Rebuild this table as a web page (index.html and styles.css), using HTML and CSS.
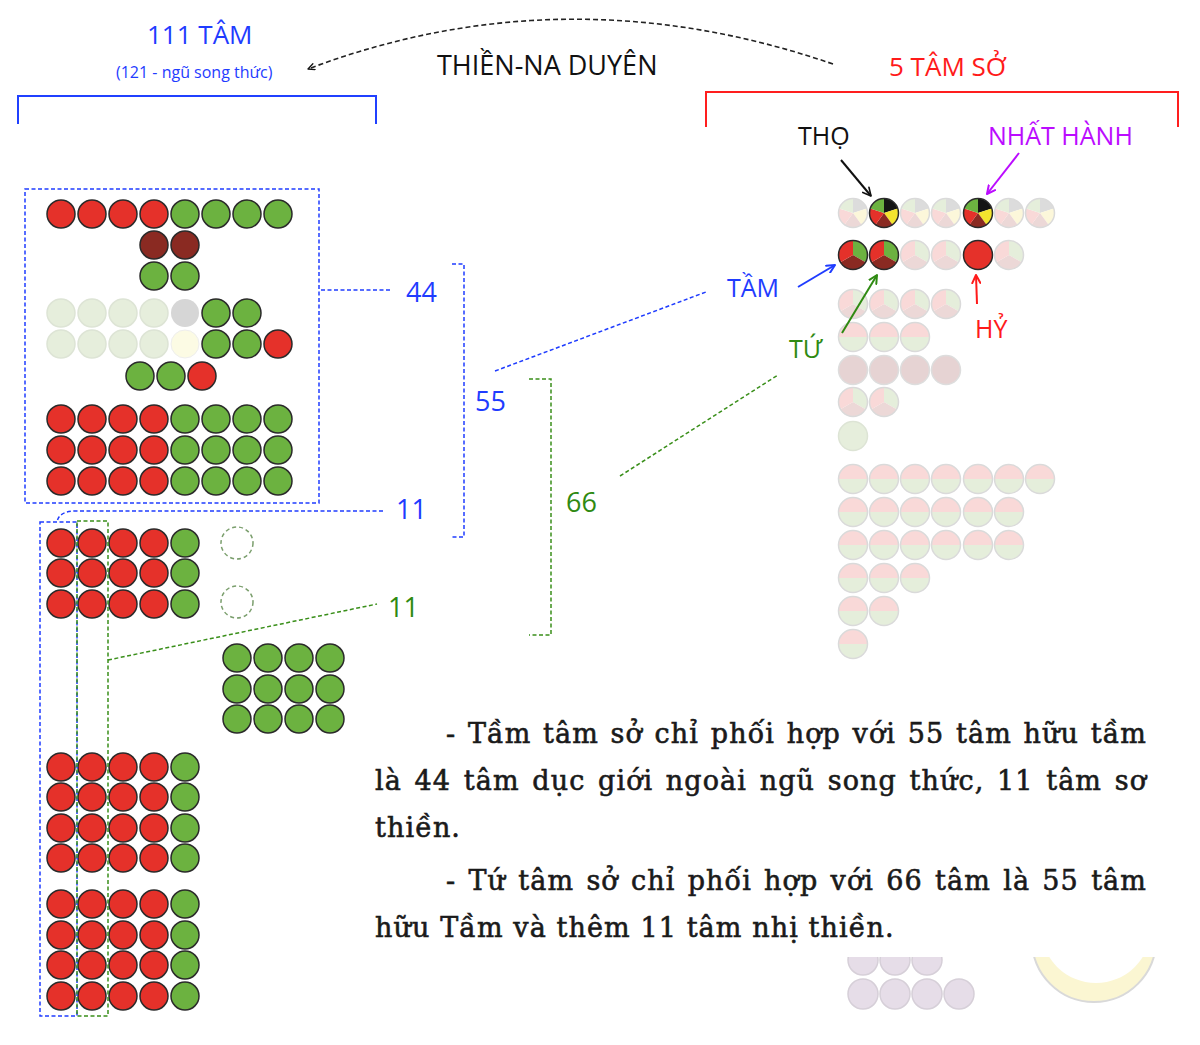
FILE: index.html
```html
<!DOCTYPE html>
<html lang="vi">
<head>
<meta charset="utf-8">
<title>Tâm sở – Thiền-na duyên</title>
<link rel="stylesheet" href="styles.css">
</head>
<body>
<div class="page">
<svg class="diagram" width="1200" height="1045" viewBox="0 0 1200 1045" xmlns="http://www.w3.org/2000/svg">
  <defs>
    <marker id="ak" viewBox="0 0 10 10" refX="9" refY="5" markerWidth="10" markerHeight="10" markerUnits="userSpaceOnUse" orient="auto"><path class="mk mk-k" d="M1 1 L9 5 L1 9"/></marker>
    <marker id="ak2" viewBox="0 0 10 10" refX="9" refY="5" markerWidth="8" markerHeight="8" markerUnits="userSpaceOnUse" orient="auto"><path class="mk mk-k" d="M1 1 L9 5 L1 9"/></marker>
    <marker id="am" viewBox="0 0 10 10" refX="9" refY="5" markerWidth="10" markerHeight="10" markerUnits="userSpaceOnUse" orient="auto"><path class="mk mk-m" d="M1 1 L9 5 L1 9"/></marker>
    <marker id="ab" viewBox="0 0 10 10" refX="9" refY="5" markerWidth="10" markerHeight="10" markerUnits="userSpaceOnUse" orient="auto"><path class="mk mk-b" d="M1 1 L9 5 L1 9"/></marker>
    <marker id="ag" viewBox="0 0 10 10" refX="9" refY="5" markerWidth="10" markerHeight="10" markerUnits="userSpaceOnUse" orient="auto"><path class="mk mk-g" d="M1 1 L9 5 L1 9"/></marker>
    <marker id="ar" viewBox="0 0 10 10" refX="9" refY="5" markerWidth="10" markerHeight="10" markerUnits="userSpaceOnUse" orient="auto"><path class="mk mk-r" d="M1 1 L9 5 L1 9"/></marker>

    <g id="p5">
      <path class="k" d="M0 0 L0 -14.5 A14.5 14.5 0 0 1 13.79 -4.48 Z"/>
      <path class="y" d="M0 0 L13.79 -4.48 A14.5 14.5 0 0 1 8.52 11.73 Z"/>
      <path class="dr" d="M0 0 L8.52 11.73 A14.5 14.5 0 0 1 -8.52 11.73 Z"/>
      <path class="r" d="M0 0 L-8.52 11.73 A14.5 14.5 0 0 1 -13.79 -4.48 Z"/>
      <path class="g" d="M0 0 L-13.79 -4.48 A14.5 14.5 0 0 1 0 -14.5 Z"/>
      <circle class="ol" r="14.5"/>
    </g>
    <g id="p5f">
      <path class="fk" d="M0 0 L0 -14.5 A14.5 14.5 0 0 1 13.79 -4.48 Z"/>
      <path class="fy" d="M0 0 L13.79 -4.48 A14.5 14.5 0 0 1 8.52 11.73 Z"/>
      <path class="fdr" d="M0 0 L8.52 11.73 A14.5 14.5 0 0 1 -8.52 11.73 Z"/>
      <path class="fr" d="M0 0 L-8.52 11.73 A14.5 14.5 0 0 1 -13.79 -4.48 Z"/>
      <path class="fg" d="M0 0 L-13.79 -4.48 A14.5 14.5 0 0 1 0 -14.5 Z"/>
      <circle class="fol" r="14.5"/>
    </g>
    <g id="p3">
      <path class="g" d="M0 0 L0 -14.5 A14.5 14.5 0 0 1 12.56 7.25 Z"/>
      <path class="dr" d="M0 0 L12.56 7.25 A14.5 14.5 0 0 1 -12.56 7.25 Z"/>
      <path class="r" d="M0 0 L-12.56 7.25 A14.5 14.5 0 0 1 0 -14.5 Z"/>
      <circle class="ol" r="14.5"/>
    </g>
    <g id="p3f">
      <path class="fg" d="M0 0 L0 -14.5 A14.5 14.5 0 0 1 12.56 7.25 Z"/>
      <path class="fdr" d="M0 0 L12.56 7.25 A14.5 14.5 0 0 1 -12.56 7.25 Z"/>
      <path class="fr" d="M0 0 L-12.56 7.25 A14.5 14.5 0 0 1 0 -14.5 Z"/>
      <circle class="fol" r="14.5"/>
    </g>
    <g id="hf">
      <path class="fr" d="M-14.5 0 A14.5 14.5 0 0 1 14.5 0 Z"/>
      <path class="fg" d="M-14.5 0 A14.5 14.5 0 0 0 14.5 0 Z"/>
      <circle class="fol" r="14.5"/>
    </g>
  </defs>

  <!-- header -->
  <text class="lbl blue t26" x="147" y="44">111 TÂM</text>
  <text class="lbl blue t16" x="116" y="78">(121 - ngũ song thức)</text>
  <path class="brk-b" d="M18 124 V96 H376 V124"/>

  <path class="arc" d="M833 64 Q565 -28 308 69" marker-end="url(#ak2)"/>
  <text class="lbl black t27" x="437" y="75">THIỀN-NA DUYÊN</text>

  <text class="lbl red t26" x="889" y="76">5 TÂM SỞ</text>
  <path class="brk-r" d="M706 127 V92 H1178 V127"/>

  <!-- left upper group -->
  <g class="c">
    <circle class="r" cx="61" cy="214" r="14"/><circle class="r" cx="92" cy="214" r="14"/><circle class="r" cx="123" cy="214" r="14"/><circle class="r" cx="154" cy="214" r="14"/>
    <circle class="g" cx="185" cy="214" r="14"/><circle class="g" cx="216" cy="214" r="14"/><circle class="g" cx="247" cy="214" r="14"/><circle class="g" cx="278" cy="214" r="14"/>
    <circle class="dr" cx="154" cy="245" r="14"/><circle class="dr" cx="185" cy="245" r="14"/>
    <circle class="g" cx="154" cy="276" r="14"/><circle class="g" cx="185" cy="276" r="14"/>
    <circle class="g" cx="216" cy="313" r="14"/><circle class="g" cx="247" cy="313" r="14"/>
    <circle class="g" cx="216" cy="344" r="14"/><circle class="g" cx="247" cy="344" r="14"/><circle class="r" cx="278" cy="344" r="14"/>
    <circle class="g" cx="140" cy="376" r="14"/><circle class="g" cx="171" cy="376" r="14"/><circle class="r" cx="202" cy="376" r="14"/>

    <circle class="r" cx="61" cy="419" r="14"/><circle class="r" cx="92" cy="419" r="14"/><circle class="r" cx="123" cy="419" r="14"/><circle class="r" cx="154" cy="419" r="14"/>
    <circle class="g" cx="185" cy="419" r="14"/><circle class="g" cx="216" cy="419" r="14"/><circle class="g" cx="247" cy="419" r="14"/><circle class="g" cx="278" cy="419" r="14"/>
    <circle class="r" cx="61" cy="450" r="14"/><circle class="r" cx="92" cy="450" r="14"/><circle class="r" cx="123" cy="450" r="14"/><circle class="r" cx="154" cy="450" r="14"/>
    <circle class="g" cx="185" cy="450" r="14"/><circle class="g" cx="216" cy="450" r="14"/><circle class="g" cx="247" cy="450" r="14"/><circle class="g" cx="278" cy="450" r="14"/>
    <circle class="r" cx="61" cy="481" r="14"/><circle class="r" cx="92" cy="481" r="14"/><circle class="r" cx="123" cy="481" r="14"/><circle class="r" cx="154" cy="481" r="14"/>
    <circle class="g" cx="185" cy="481" r="14"/><circle class="g" cx="216" cy="481" r="14"/><circle class="g" cx="247" cy="481" r="14"/><circle class="g" cx="278" cy="481" r="14"/>
  </g>
  <g class="pale">
    <circle cx="61" cy="313" r="14"/><circle cx="92" cy="313" r="14"/><circle cx="123" cy="313" r="14"/><circle cx="154" cy="313" r="14"/>
    <circle cx="61" cy="344" r="14"/><circle cx="92" cy="344" r="14"/><circle cx="123" cy="344" r="14"/><circle cx="154" cy="344" r="14"/>
  </g>
  <circle class="grey" cx="185" cy="313" r="14"/>
  <circle class="cream" cx="185" cy="344" r="14"/>

  <rect class="box-b" x="25" y="189" width="294" height="314"/>
  <line class="dash-b" x1="321" y1="290" x2="392" y2="290"/>
  <text class="lbl blue t27" x="406" y="302">44</text>

  <!-- left lower group -->
  <g class="c">
    <circle class="r" cx="61" cy="543" r="14"/><circle class="r" cx="92" cy="543" r="14"/><circle class="r" cx="123" cy="543" r="14"/><circle class="r" cx="154" cy="543" r="14"/><circle class="g" cx="185" cy="543" r="14"/>
    <circle class="r" cx="61" cy="573" r="14"/><circle class="r" cx="92" cy="573" r="14"/><circle class="r" cx="123" cy="573" r="14"/><circle class="r" cx="154" cy="573" r="14"/><circle class="g" cx="185" cy="573" r="14"/>
    <circle class="r" cx="61" cy="604" r="14"/><circle class="r" cx="92" cy="604" r="14"/><circle class="r" cx="123" cy="604" r="14"/><circle class="r" cx="154" cy="604" r="14"/><circle class="g" cx="185" cy="604" r="14"/>

    <circle class="g" cx="237" cy="658" r="14"/><circle class="g" cx="268" cy="658" r="14"/><circle class="g" cx="299" cy="658" r="14"/><circle class="g" cx="330" cy="658" r="14"/>
    <circle class="g" cx="237" cy="689" r="14"/><circle class="g" cx="268" cy="689" r="14"/><circle class="g" cx="299" cy="689" r="14"/><circle class="g" cx="330" cy="689" r="14"/>
    <circle class="g" cx="237" cy="719" r="14"/><circle class="g" cx="268" cy="719" r="14"/><circle class="g" cx="299" cy="719" r="14"/><circle class="g" cx="330" cy="719" r="14"/>

    <circle class="r" cx="61" cy="767" r="14"/><circle class="r" cx="92" cy="767" r="14"/><circle class="r" cx="123" cy="767" r="14"/><circle class="r" cx="154" cy="767" r="14"/><circle class="g" cx="185" cy="767" r="14"/>
    <circle class="r" cx="61" cy="797" r="14"/><circle class="r" cx="92" cy="797" r="14"/><circle class="r" cx="123" cy="797" r="14"/><circle class="r" cx="154" cy="797" r="14"/><circle class="g" cx="185" cy="797" r="14"/>
    <circle class="r" cx="61" cy="828" r="14"/><circle class="r" cx="92" cy="828" r="14"/><circle class="r" cx="123" cy="828" r="14"/><circle class="r" cx="154" cy="828" r="14"/><circle class="g" cx="185" cy="828" r="14"/>
    <circle class="r" cx="61" cy="858" r="14"/><circle class="r" cx="92" cy="858" r="14"/><circle class="r" cx="123" cy="858" r="14"/><circle class="r" cx="154" cy="858" r="14"/><circle class="g" cx="185" cy="858" r="14"/>
    <circle class="r" cx="61" cy="904" r="14"/><circle class="r" cx="92" cy="904" r="14"/><circle class="r" cx="123" cy="904" r="14"/><circle class="r" cx="154" cy="904" r="14"/><circle class="g" cx="185" cy="904" r="14"/>
    <circle class="r" cx="61" cy="935" r="14"/><circle class="r" cx="92" cy="935" r="14"/><circle class="r" cx="123" cy="935" r="14"/><circle class="r" cx="154" cy="935" r="14"/><circle class="g" cx="185" cy="935" r="14"/>
    <circle class="r" cx="61" cy="965" r="14"/><circle class="r" cx="92" cy="965" r="14"/><circle class="r" cx="123" cy="965" r="14"/><circle class="r" cx="154" cy="965" r="14"/><circle class="g" cx="185" cy="965" r="14"/>
    <circle class="r" cx="61" cy="996" r="14"/><circle class="r" cx="92" cy="996" r="14"/><circle class="r" cx="123" cy="996" r="14"/><circle class="r" cx="154" cy="996" r="14"/><circle class="g" cx="185" cy="996" r="14"/>
  </g>
  <circle class="ghost" cx="237" cy="543" r="16"/>
  <circle class="ghost" cx="237" cy="602" r="16"/>

  <rect class="box-b" x="40" y="522" width="37" height="494"/>
  <rect class="box-g" x="77" y="521" width="31" height="495"/>
  <path class="dash-b" d="M383 511 H76 Q59 511 57 522"/>
  <line class="dash-g" x1="108" y1="660" x2="377" y2="604"/>

  <text class="lbl blue t27" x="396" y="519">11</text>
  <text class="lbl green t27" x="388" y="617">11</text>

  <!-- brackets -->
  <path class="dash-b" d="M452 264 H464 V537 H452"/>
  <text class="lbl blue t27" x="475" y="411">55</text>
  <line class="dash-b" x1="495" y1="371" x2="706" y2="292"/>
  <path class="dash-g" d="M529 379 H551 V635 H529"/>
  <text class="lbl green t27" x="566" y="512">66</text>
  <line class="dash-g" x1="620" y1="476" x2="778" y2="375"/>

  <!-- right group -->
  <use href="#p5f" x="853" y="213"/><use href="#p5" x="884" y="213"/><use href="#p5f" x="915" y="213"/><use href="#p5f" x="946" y="213"/>
  <use href="#p5" x="978" y="213"/><use href="#p5f" x="1009" y="213"/><use href="#p5f" x="1040" y="213"/>

  <use href="#p3" x="853" y="255"/><use href="#p3" x="884" y="255"/><use href="#p3f" x="915" y="255"/><use href="#p3f" x="946" y="255"/>
  <circle class="c r" cx="978" cy="255" r="14.5"/>
  <use href="#p3f" x="1009" y="255"/>

  <use href="#p3f" x="853" y="304"/><use href="#p3f" x="884" y="304"/><use href="#p3f" x="915" y="304"/><use href="#p3f" x="946" y="304"/>
  <use href="#hf" x="853" y="337"/><use href="#hf" x="884" y="337"/><use href="#hf" x="915" y="337"/>
  <g class="mauve">
    <circle cx="853" cy="370" r="14.5"/><circle cx="884" cy="370" r="14.5"/><circle cx="915" cy="370" r="14.5"/><circle cx="946" cy="370" r="14.5"/>
  </g>
  <use href="#p3f" x="853" y="402"/><use href="#p3f" x="884" y="402"/>
  <circle class="pale" cx="853" cy="436" r="14.5"/>

  <use href="#hf" x="853" y="479"/><use href="#hf" x="884" y="479"/><use href="#hf" x="915" y="479"/><use href="#hf" x="946" y="479"/><use href="#hf" x="978" y="479"/><use href="#hf" x="1009" y="479"/><use href="#hf" x="1040" y="479"/>
  <use href="#hf" x="853" y="512"/><use href="#hf" x="884" y="512"/><use href="#hf" x="915" y="512"/><use href="#hf" x="946" y="512"/><use href="#hf" x="978" y="512"/><use href="#hf" x="1009" y="512"/>
  <use href="#hf" x="853" y="545"/><use href="#hf" x="884" y="545"/><use href="#hf" x="915" y="545"/><use href="#hf" x="946" y="545"/><use href="#hf" x="978" y="545"/><use href="#hf" x="1009" y="545"/>
  <use href="#hf" x="853" y="578"/><use href="#hf" x="884" y="578"/><use href="#hf" x="915" y="578"/>
  <use href="#hf" x="853" y="611"/><use href="#hf" x="884" y="611"/>
  <use href="#hf" x="853" y="644"/>

  <!-- right labels & arrows -->
  <text class="lbl black t25" x="798" y="145">THỌ</text>
  <text class="lbl magenta t25" x="988" y="145">NHẤT HÀNH</text>
  <line class="ar-k" x1="841" y1="160" x2="871" y2="196" marker-end="url(#ak)"/>
  <line class="ar-m" x1="1019" y1="153" x2="987" y2="194" marker-end="url(#am)"/>

  <text class="lbl blue t25" x="727" y="297">TẦM</text>
  <line class="ar-b" x1="798" y1="287" x2="835" y2="265" marker-end="url(#ab)"/>
  <text class="lbl green t25" x="789" y="358">TỨ</text>
  <line class="ar-g" x1="842" y1="333" x2="877" y2="275" marker-end="url(#ag)"/>
  <text class="lbl red t25" x="975" y="338">HỶ</text>
  <line class="ar-r" x1="977" y1="304" x2="976" y2="275" marker-end="url(#ar)"/>

  <!-- bottom right, partly covered -->
  <g class="lilac">
    <circle cx="863" cy="960" r="15"/><circle cx="895" cy="960" r="15"/><circle cx="927" cy="960" r="15"/>
    <circle cx="863" cy="994" r="15"/><circle cx="895" cy="994" r="15"/><circle cx="927" cy="994" r="15"/><circle cx="959" cy="994" r="15"/>
  </g>
  <circle class="moon" cx="1094" cy="940" r="62"/>
  <circle class="moon-in" cx="1096" cy="928" r="55"/>
</svg>

<div class="note">
  <p class="para">
    <span class="ln just ind">- Tầm tâm sở chỉ phối hợp với 55 tâm hữu tầm</span>
    <span class="ln just">là 44 tâm dục giới ngoài ngũ song thức, 11 tâm sơ</span>
    <span class="ln">thiền.</span>
  </p>
  <p class="para">
    <span class="ln just ind">- Tứ tâm sở chỉ phối hợp với 66 tâm là 55 tâm</span>
    <span class="ln">hữu Tầm và thêm 11 tâm nhị thiền.</span>
  </p>
</div>
</div>
</body>
</html>
```

FILE: styles.css
```css
html, body {
  margin: 0;
  padding: 0;
  background: #ffffff;
}

.page {
  position: relative;
  width: 1200px;
  height: 1045px;
  overflow: hidden;
}

.diagram {
  display: block;
}

/* labels */
.lbl {
  font-family: "Open Sans", "Noto Sans", sans-serif;
}
.t16 { font-size: 16px; }
.t25 { font-size: 25px; }
.t26 { font-size: 26px; }
.t27 { font-size: 27px; }
.blue { fill: #1f3cff; }
.red { fill: #ff1a1a; }
.black { fill: #111111; }
.magenta { fill: #bb0cff; }
.green { fill: #2f8a12; }

/* circle fills */
.c circle, circle.c { stroke: #2a2a2a; stroke-width: 1.5; }
.r { fill: #e5312a; }
.g { fill: #6cb240; }
.dr { fill: #8a2a22; }
.k { fill: #141414; }
.y { fill: #f3e42e; }
.ol { fill: none; stroke: #2a2a2a; stroke-width: 1.5; }

.fr { fill: #f9d9d8; }
.fg { fill: #e5eedb; }
.fdr { fill: #ecd8d7; }
.fk { fill: #dcdcdc; }
.fy { fill: #fcf7da; }
.fol { fill: none; stroke: #dadada; stroke-width: 1.5; }

.pale circle, circle.pale { fill: #e6eedc; stroke: #dde4d5; stroke-width: 1.5; }
.grey { fill: #d6d6d6; }
.cream { fill: #fcfbe4; stroke: #eeeeee; stroke-width: 1; }
.mauve circle { fill: #e6d3d3; stroke: #dddddd; stroke-width: 1.5; }
.lilac circle { fill: #e6dde8; stroke: #d6cfd8; stroke-width: 1.5; }
.moon { fill: #fbf6d2; stroke: #d9d9d9; stroke-width: 2; }
.moon-in { fill: #ffffff; }

.ghost {
  fill: none;
  stroke: #7a9e6c;
  stroke-width: 1.5;
  stroke-dasharray: 4 3;
}

/* lines */
.brk-b { fill: none; stroke: #2040ff; stroke-width: 2; }
.brk-r { fill: none; stroke: #ff1e1e; stroke-width: 2; }
.arc { fill: none; stroke: #222222; stroke-width: 1.6; stroke-dasharray: 5 3; }

.box-b, .dash-b {
  fill: none;
  stroke: #1f3cff;
  stroke-width: 1.5;
  stroke-dasharray: 4 2.5;
}
.box-g, .dash-g {
  fill: none;
  stroke: #3a8f1a;
  stroke-width: 1.5;
  stroke-dasharray: 4 2.5;
}

.ar-k { stroke: #111111; stroke-width: 2; }
.ar-m { stroke: #bb0cff; stroke-width: 2; }
.ar-b { stroke: #1f3cff; stroke-width: 2; }
.ar-g { stroke: #2f8a12; stroke-width: 2; }
.ar-r { stroke: #ff1a1a; stroke-width: 2; }

.mk { fill: none; stroke-width: 2; stroke-linecap: round; stroke-linejoin: round; }
.mk-k { stroke: #111111; stroke-width: 1.6; }
.mk-m { stroke: #bb0cff; }
.mk-b { stroke: #1f3cff; }
.mk-g { stroke: #2f8a12; }
.mk-r { stroke: #ff1a1a; }

/* scanned note overlay */
.note {
  position: absolute;
  left: 360px;
  top: 693px;
  width: 840px;
  height: 264px;
  box-sizing: border-box;
  padding: 17px 0 0 15px;
  background: #ffffff;
}

.para {
  margin: 0;
  width: 772px;
  font-family: "DejaVu Serif", "Liberation Serif", serif;
  font-size: 27px;
  line-height: 47px;
  letter-spacing: 1.1px;
  color: #1a1a1a;
  -webkit-text-stroke: 0.6px #1a1a1a;
}
.para + .para { margin-top: 6px; }

.ln { display: block; white-space: nowrap; }
.just { text-align: justify; text-align-last: justify; white-space: normal; }
.ind { padding-left: 71px; }
```
